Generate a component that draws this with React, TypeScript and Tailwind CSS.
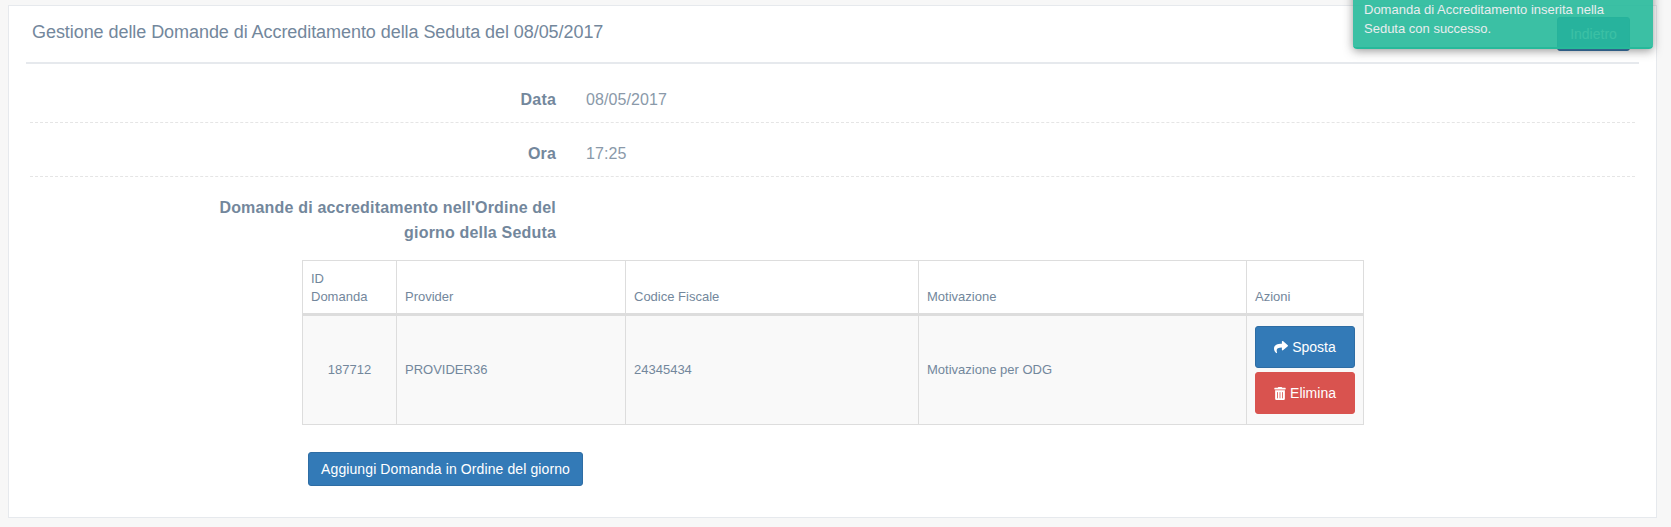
import { FaShare, FaTrashAlt } from "react-icons/fa";

function FieldRow({ label, value }: { label: string; value: string }) {
  return (
    <div className="flex h-[54px] items-start border-b border-dashed border-[#e5e5e5] pt-[18px]">
      <div className="w-[526px] text-right text-[16px] leading-[25px] font-bold tracking-[0.18px]">{label}</div>
      <div className="ml-[30px] text-[16px] leading-[25px] tracking-[0.1px] text-[#8a99a9]">{value}</div>
    </div>
  );
}

const th = "border border-b-[3px] border-[#dddddd] pt-[9px] pr-[8px] pb-[7px] pl-[8px] text-left align-bottom font-normal";
const td = "border border-[#dddddd] px-[8px] py-[10px]";

export default function App() {
  return (
    <div className="relative h-[527px] overflow-hidden bg-[#f7f7f7] pt-[5px] pr-[14px] pl-[8px] font-['Liberation_Sans',Arial,sans-serif] text-[#73879c]">
      {/* Panel */}
      <div className="h-[513px] border border-[#e6e9ed] bg-white px-[17px]">
        <div className="flex h-[58px] items-start justify-between border-b-2 border-[#e6e9ed] pt-[11px] pl-[6px]">
          <h2 className="text-[18px] leading-[30px] font-normal tracking-[-0.06px]">
            Gestione delle Domande di Accreditamento della Seduta del 08/05/2017
          </h2>
          <button className="mr-[9px] h-[34px] w-[73px] rounded-[3px] border border-[#2e6da4] bg-[#337ab7] text-[14px] text-white">
            Indietro
          </button>
        </div>

        <div className="mx-[4px] mt-[5px]">
          <FieldRow label="Data" value="08/05/2017" />
          <FieldRow label="Ora" value="17:25" />
          <div className="w-[526px] pt-[18px] pl-[170px] text-right text-[16px] leading-[25px] font-bold tracking-[0.18px]">
            Domande di accreditamento nell'Ordine del giorno della Seduta
          </div>
        </div>

        {/* Table */}
        <div className="mt-[15px] ml-[276px] w-[1062px]">
          <table className="w-full table-fixed border-collapse text-[13px] leading-[18px]">
            <thead>
              <tr>
                <th className={`w-[94px] ${th}`}>
                  ID
                  <br />
                  Domanda
                </th>
                <th className={`w-[229px] ${th}`}>Provider</th>
                <th className={`w-[293px] ${th}`}>Codice Fiscale</th>
                <th className={`w-[328px] ${th}`}>Motivazione</th>
                <th className={th}>Azioni</th>
              </tr>
            </thead>
            <tbody>
              <tr className="bg-[#f9f9f9]">
                <td className={`${td} text-center`}>187712</td>
                <td className={td}>PROVIDER36</td>
                <td className={td}>24345434</td>
                <td className={td}>Motivazione per ODG</td>
                <td className={td}>
                  <div className="flex flex-col gap-[4px]">
                    <button className="flex h-[42px] items-center justify-center gap-[4px] rounded-[3px] border border-[#2e6da4] bg-[#337ab7] text-[14px] text-white">
                      <FaShare className="h-[14px] w-[14px]" />
                      Sposta
                    </button>
                    <button className="flex h-[42px] items-center justify-center gap-[4px] rounded-[3px] border border-[#d9534f] bg-[#d9534f] text-[14px] text-white">
                      <FaTrashAlt className="h-[13px] w-[12px]" />
                      Elimina
                    </button>
                  </div>
                </td>
              </tr>
            </tbody>
          </table>
          <button className="mt-[27px] ml-[6px] h-[34px] w-[275px] rounded-[3px] border border-[#2e6da4] bg-[#337ab7] text-[14px] tracking-[0.1px] text-white">
            Aggiungi Domanda in Ordine del giorno
          </button>
        </div>
      </div>

      {/* Notification */}
      <div className="absolute top-[-20px] left-[1353px] h-[69px] w-[300px] rounded-[4px] border-b-2 border-[#26b99a] bg-[#26b99a]/90 px-[11px] pt-[20px] text-[13px] leading-[19px] text-[#e9edef] shadow-[0_2px_10px_rgba(50,50,50,0.5)]">
        Domanda di Accreditamento inserita nella Seduta con successo.
      </div>
    </div>
  );
}
